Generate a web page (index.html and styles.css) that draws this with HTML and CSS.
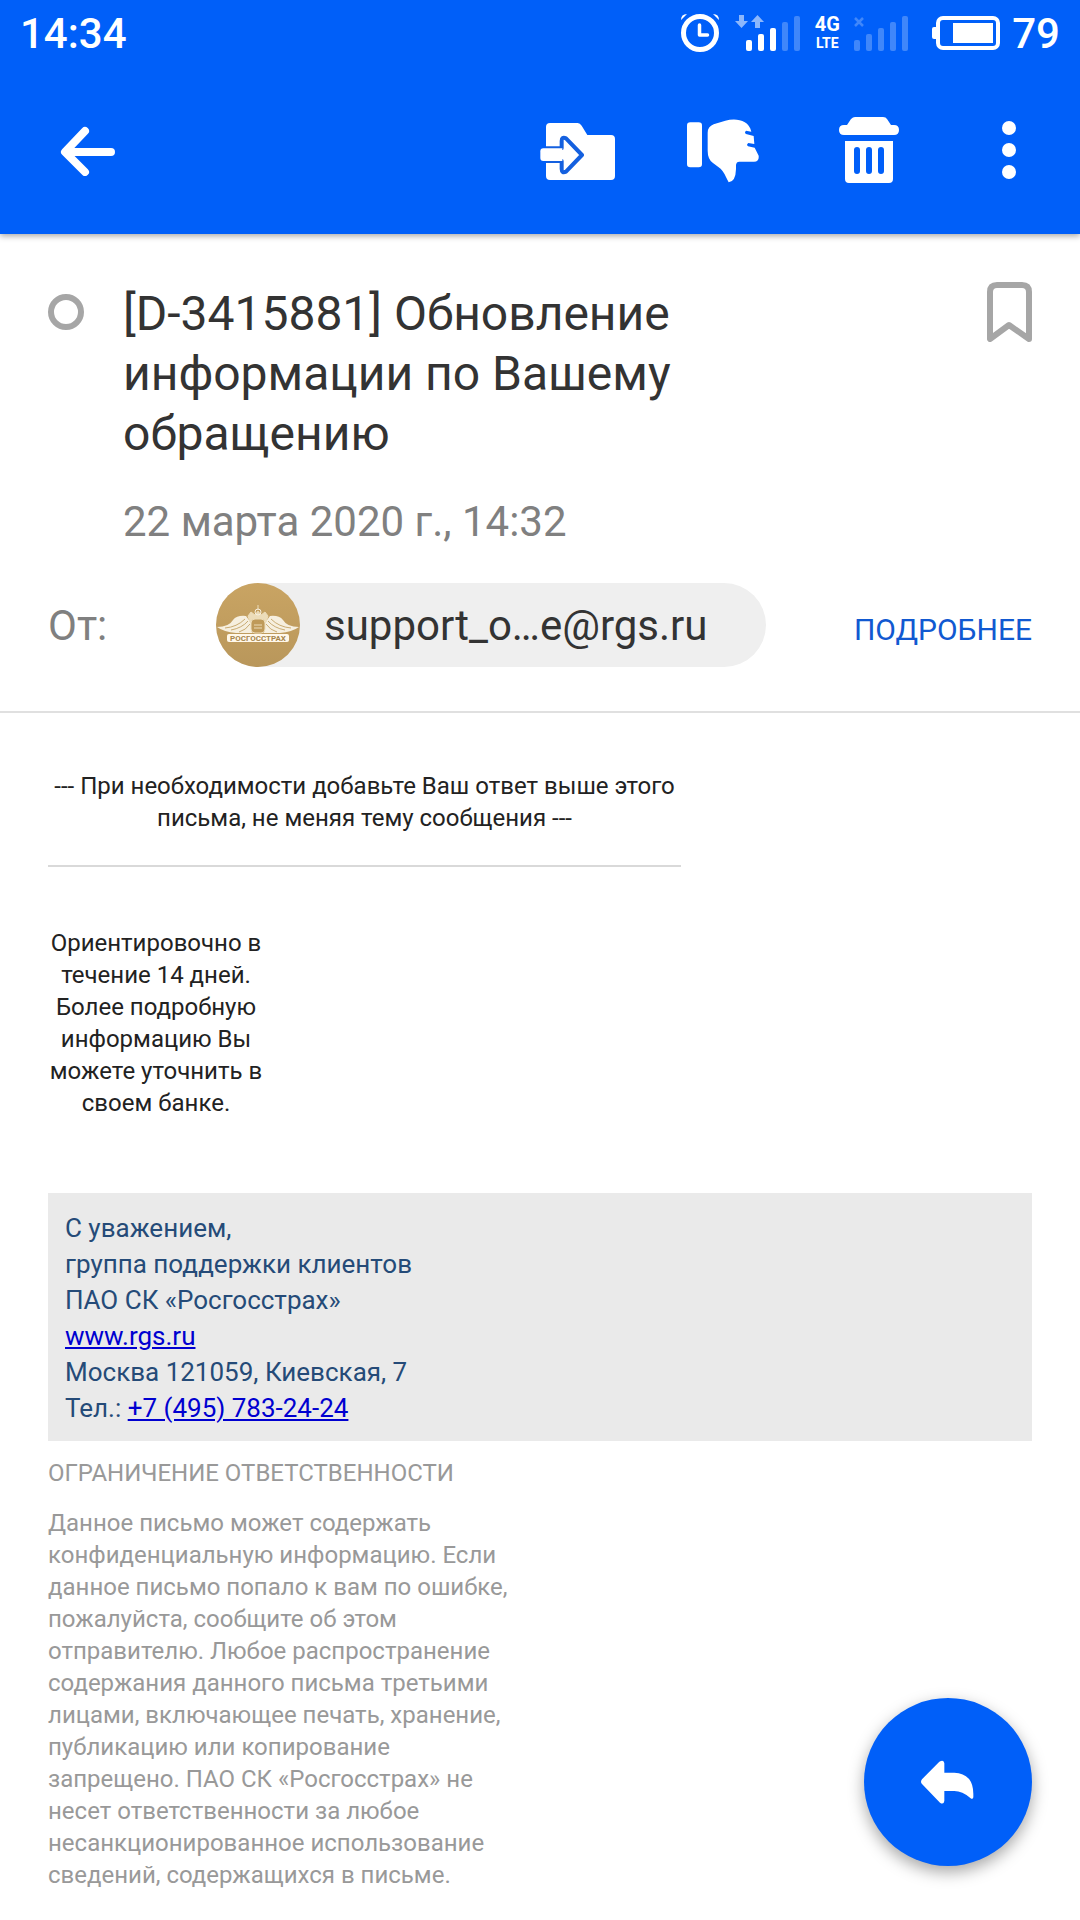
FILE: index.html
```html
<!DOCTYPE html>
<html lang="ru">
<head>
<meta charset="utf-8">
<meta name="viewport" content="width=device-width, initial-scale=1">
<title>Обновление информации по Вашему обращению</title>
<link rel="stylesheet" href="styles.css">
</head>
<body>
<header class="header">
  <div class="status">
    <span class="clock">14:34</span>
    <div class="indicators">
      <svg class="alarm" width="40" height="40" viewBox="0 0 40 40" fill="none" stroke="#fff">
        <circle cx="20" cy="20" r="16.500" stroke-width="5"/>
        <path d="M19.500 12v10h8" stroke-width="3.500" stroke-linejoin="round" stroke-linecap="round"/>
        <path d="M1 7q0-6 6-6zM39 7q0-6-6-6z" fill="#fff" stroke="none"/>
      </svg>
      <svg width="66" height="38" viewBox="0 0 66 38" fill="#fff">
        <path d="M4 1h5v6h4l-6.500 7L0 7h4zM20 14h5V8h4l-6.500-7L16 8h4z" opacity=".55"/>
        <rect x="11" y="26" width="6" height="11" rx="2"/>
        <rect x="23" y="20" width="6" height="17" rx="2"/>
        <rect x="35" y="14" width="6" height="23" rx="2"/>
        <rect x="47" y="8" width="6" height="29" rx="2" opacity=".25"/>
        <rect x="59" y="2" width="6" height="35" rx="2" opacity=".25"/>
      </svg>
      <div class="network"><span class="net-gen">4G</span><span class="net-type">LTE</span></div>
      <svg width="56" height="38" viewBox="0 0 56 38" fill="#fff" opacity=".25">
        <path d="M2 4l8 8M10 4l-8 8" stroke="#fff" stroke-width="2.500"/>
        <rect x="1" y="26" width="6" height="11" rx="2"/>
        <rect x="13" y="20" width="6" height="17" rx="2"/>
        <rect x="25" y="14" width="6" height="23" rx="2"/>
        <rect x="37" y="8" width="6" height="29" rx="2"/>
        <rect x="49" y="2" width="6" height="35" rx="2"/>
      </svg>
      <svg class="battery" width="68" height="34" viewBox="0 0 68 34">
        <rect x="0" y="11" width="6" height="12" rx="2" fill="#fff"/>
        <rect x="6" y="2" width="60" height="30" rx="5" fill="none" stroke="#fff" stroke-width="4"/>
        <rect x="21" y="7" width="40" height="20" fill="#fff"/>
      </svg>
      <span class="charge">79</span>
    </div>
  </div>
  <nav class="toolbar" aria-label="Действия с письмом">
    <button class="tool tool-back" aria-label="Назад">
      <svg width="56" height="52" viewBox="0 0 56 52" fill="none" stroke="#fff" stroke-width="8" stroke-linecap="round" stroke-linejoin="round"><path d="M25 7L5 28l20 20M6 28h45"/></svg>
    </button>
    <button class="tool" aria-label="Переместить в папку">
      <svg width="76" height="66" viewBox="27 36 228 198">
        <path d="M60 54h83q7 0 12 8l17 28h71q12 0 12 12v111q0 12-12 12H60q-12 0-12-12V66q0-12 12-12z" fill="#fff"/>
        <path d="M40 130h55v-22q0-14 13-8l48 50-48 50q-13 6-13-8v-24H40q-9 0-9-9v-20q0-9 9-9z" fill="#fff" stroke="#1460df" stroke-width="12" stroke-linejoin="round"/>
        <path d="M24 115h24v70H24z" fill="#005ff9"/>
        <path d="M40 130h57v38H40q-9 0-9-9v-20q0-9 9-9z" fill="#fff"/>
      </svg>
    </button>
    <button class="tool" aria-label="Спам">
      <svg width="72" height="66" viewBox="471 38 216 198" fill="#fff">
        <rect x="471" y="54" width="45" height="135" rx="10"/>
        <path d="M533 85q0-18 18-25l35-11c30-8 70-4 78 33l-16-3q-6 6 0 10l23 6 2 24-18-3q-7 5-1 10l20 4 12 24q2 18-14 18h-44q-9 0-10 10v12q-1 38-22 40l-7-14q-10-23-24-32l-17-13q-15-11-15-36z"/>
      </svg>
    </button>
    <button class="tool" aria-label="Удалить">
      <svg width="60" height="66" viewBox="0 0 60 66" fill="#fff">
        <path d="M8 8l4-6q2-2 4-2h28q3 0 4 2l4 6h3q5 0 5 5t-5 5H5q-5 0-5-5t5-5z"/>
        <path fill-rule="evenodd" d="M6 24h48v38q0 4-4 4H10q-4 0-4-4zM15 33v21a3 3 0 0 0 6 0V33a3 3 0 0 0-6 0zM27 33v21a3 3 0 0 0 6 0V33a3 3 0 0 0-6 0zM39 33v21a3 3 0 0 0 6 0V33a3 3 0 0 0-6 0z"/>
      </svg>
    </button>
    <button class="tool tool-more" aria-label="Ещё">
      <svg width="14" height="66" viewBox="0 0 14 66" fill="#fff"><circle cx="7" cy="11" r="7"/><circle cx="7" cy="33" r="7"/><circle cx="7" cy="55" r="7"/></svg>
    </button>
  </nav>
</header>

<main>
  <section class="meta">
    <div class="subject-row">
      <button class="unread" aria-label="Отметить непрочитанным"></button>
      <div class="subject-text">
        <h1 class="subject">[D-3415881] Обновление информации по Вашему обращению</h1>
        <time class="date" datetime="2020-03-22T14:32">22 марта 2020 г., 14:32</time>
      </div>
      <button class="flag" aria-label="Отметить флажком">
        <svg width="46" height="60" viewBox="0 0 46 60" fill="none" stroke="#a6a6a6" stroke-width="6" stroke-linejoin="round"><path d="M4 57V10q0-7 7-7h25q7 0 7 7v47L23 43z"/></svg>
      </button>
    </div>
    <div class="from-row">
      <span class="from-label">От:</span>
      <button class="sender">
        <svg class="avatar" width="84" height="84" viewBox="0 0 84 84" aria-hidden="true">
          <defs><linearGradient id="gold" x1="0" y1="0" x2="0" y2="1"><stop offset="0" stop-color="#c9a463"/><stop offset="1" stop-color="#b9975b"/></linearGradient></defs>
          <circle cx="42" cy="42" r="42" fill="url(#gold)"/>
          <path d="M1 44q12 0 16-7 4-5 13-4l6 8v9H20Q8 49 1 44zM83 44q-12 0-16-7-4-5-13-4l-6 8v9h16q12-1 19-6z" fill="#f6efdf"/>
          <path d="M9 45q12-1 20-9M15 47q11-2 17-9M23 49q7-2 11-8M75 45q-12-1-20-9M69 47q-11-2-17-9M61 49q-7-2-11-8" fill="none" stroke="#c9ab72" stroke-width="1"/>
          <path d="M42 22v5M32 33l3-4 4 3 3-4 3 4 4-3 3 4-2 6H34z" fill="#ecdcb9" stroke="#ecdcb9" stroke-width="1"/>
          <circle cx="42" cy="29" r="3" fill="none" stroke="#f6efdf"/>
          <rect x="35" y="36" width="14" height="14" rx="4" fill="#bf9a59" stroke="#ecdcb9"/>
          <path d="M38 42h8M38 45h8" stroke="#ecdcb9"/>
          <rect x="11" y="51" width="62" height="8" rx="2" fill="#fff8ea"/>
          <text x="42" y="58" text-anchor="middle" class="logo-text">РОСГОССТРАХ</text>
        </svg>
        <span class="address">support_o…e@rgs.ru</span>
      </button>
      <button class="details">ПОДРОБНЕЕ</button>
    </div>
  </section>

  <article class="letter">
    <p class="notice">--- При необходимости добавьте Ваш ответ выше этого письма, не меняя тему сообщения ---</p>
    <p class="answer">Ориентировочно в течение 14 дней. Более подробную информацию Вы можете уточнить в своем банке.</p>
    <address class="signature">
      С уважением,<br>
      группа поддержки клиентов<br>
      ПАО СК «Росгосстрах»<br>
      <a href="http://www.rgs.ru">www.rgs.ru</a><br>
      Москва 121059, Киевская, 7<br>
      Тел.: <a href="tel:+74957832424">+7 (495) 783-24-24</a>
    </address>
    <div class="disclaimer">
      <p>ОГРАНИЧЕНИЕ ОТВЕТСТВЕННОСТИ</p>
      <p>Данное письмо может содержать конфиденциальную информацию. Если данное письмо попало к вам по ошибке, пожалуйста, сообщите об этом отправителю. Любое распространение содержания данного письма третьими лицами, включающее печать, хранение, публикацию или копирование запрещено. ПАО СК «Росгосстрах» не несет ответственности за любое несанкционированное использование сведений, содержащихся в письме.</p>
    </div>
  </article>
</main>

<button class="reply" aria-label="Ответить">
  <svg width="54" height="44" viewBox="245 270 162 132" fill="#fff"><path d="M248 328l52-53q14-8 15 5v28h30q58 3 57 66v8q-2 8-9 2-24-21-48-21h-30v30q-2 12-13 5l-54-56q-6-7 0-14z"/></svg>
</button>
</body>
</html>
```
FILE: styles.css
```css
* {
  box-sizing: border-box;
}

body {
  margin: 0;
  min-height: 100vh;
  background: #fff;
  color: #333;
  font-family: Roboto, "Noto Sans", sans-serif;
}

button {
  margin: 0;
  padding: 0;
  border: 0;
  background: none;
  color: inherit;
  font: inherit;
  cursor: pointer;
}

svg {
  display: block;
  flex: none;
}

h1,
p {
  margin: 0;
}

/* Header */

.header {
  background: #005ff9;
  color: #fff;
  box-shadow: 0 2px 6px rgba(0, 0, 0, 0.35);
}

.status {
  display: flex;
  align-items: center;
  justify-content: space-between;
  height: 66px;
  padding: 0 20px;
}

.clock,
.charge {
  font-size: 42px;
  font-weight: 500;
}

.indicators {
  display: flex;
  align-items: center;
}

.alarm {
  margin-right: 15px;
}

.network {
  display: flex;
  flex-direction: column;
  align-items: center;
  width: 24px;
  margin: 0 14px;
  font-weight: 700;
}

.net-gen {
  font-size: 20px;
  line-height: 20px;
}

.net-type {
  font-size: 14px;
  line-height: 18px;
}

.battery {
  margin: 0 12px 0 23px;
}

.toolbar {
  display: flex;
  align-items: center;
  gap: 66px;
  height: 168px;
  padding: 0 37px 0 60px;
}

.tool {
  display: flex;
  align-items: center;
  justify-content: center;
  width: 80px;
  height: 80px;
}

.tool-back {
  justify-content: flex-start;
  margin-right: auto;
}

.tool-more {
  width: 68px;
}

/* Subject and sender */

.meta {
  padding: 48px 48px 44px;
  border-bottom: 2px solid #e0e0e0;
}

.subject-row {
  display: flex;
  align-items: flex-start;
}

.unread {
  flex: none;
  width: 36px;
  height: 36px;
  margin: 12px 39px 0 0;
  border: 6px solid #a6a6a6;
  border-radius: 50%;
}

.subject-text {
  flex: 1;
  max-width: 600px;
  padding-top: 2px;
}

.subject {
  font-size: 48px;
  font-weight: 400;
  line-height: 60px;
}

.date {
  display: block;
  margin-top: 34px;
  color: #808080;
  font-size: 42px;
  line-height: 48px;
}

.flag {
  margin-left: auto;
}

.from-row {
  display: flex;
  align-items: center;
  margin-top: 37px;
}

.from-label {
  width: 168px;
  color: #808080;
  font-size: 42px;
}

.sender {
  display: flex;
  align-items: center;
  gap: 24px;
  height: 84px;
  padding-right: 58px;
  border-radius: 42px;
  background: #efefef;
  font-size: 42px;
}

.logo-text {
  fill: #a5854d;
  font-size: 8px;
  font-weight: 700;
}

.details {
  margin-left: auto;
  padding-top: 8px;
  color: #1159d1;
  font-size: 30px;
}

/* Letter */

.letter {
  padding: 57px 48px 28px;
  color: #222;
  font-size: 24px;
  line-height: 32px;
}

.notice {
  max-width: 633px;
  padding-bottom: 31px;
  border-bottom: 2px solid #d9d9d9;
  text-align: center;
}

.answer {
  max-width: 216px;
  margin-top: 60px;
  text-align: center;
}

.signature {
  margin-top: 74px;
  padding: 17px 17px 15px;
  background: #eaeaea;
  color: #254b78;
  font-size: 26px;
  font-style: normal;
  line-height: 36px;
}

.signature a {
  color: #0000d0;
}

.disclaimer {
  display: grid;
  gap: 18px;
  max-width: 468px;
  margin-top: 16px;
  color: #999;
}

/* Floating reply button */

.reply {
  position: fixed;
  right: 48px;
  bottom: 54px;
  display: flex;
  align-items: center;
  justify-content: center;
  width: 168px;
  height: 168px;
  border-radius: 50%;
  background: #005ff9;
  box-shadow: 0 6px 16px rgba(0, 0, 0, 0.35);
}
```
